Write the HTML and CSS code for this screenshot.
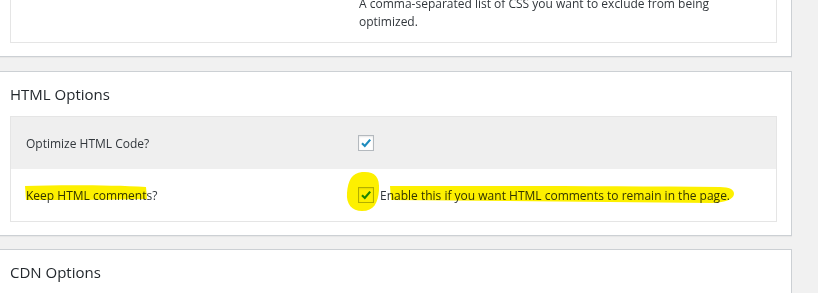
FILE: index.html
```html
<!DOCTYPE html>
<html lang="en">
    <head>
        <meta charset="UTF-8" />
        <title>Optimization Settings</title>
        <link rel="stylesheet" href="styles.css">
    </head>
    <body>
        <div class="page">
            <div class="postbox postbox-cut">
                <div class="form-table">
                    <div class="form-row">
                        <div class="row-label"></div>
                        <div class="row-field">
                            <p class="description">A comma-separated list of CSS you want to exclude from being optimized.</p>
                        </div>
                    </div>
                </div>
            </div>

            <div class="postbox postbox-html">
                <h2 class="postbox-title">HTML Options</h2>
                <div class="form-table">
                    <div class="form-row row-alt">
                        <div class="row-label">Optimize HTML Code?</div>
                        <div class="row-field">
                            <span class="checkbox checked">
                                <svg viewBox="0 0 16 16" width="16" height="16"><path d="M4 8.3 L6.8 11 L12.2 4.6" /></svg>
                            </span>
                        </div>
                    </div>
                    <div class="form-row">
                        <div class="row-label">Keep HTML comments?</div>
                        <div class="row-field">
                            <span class="checkbox checked">
                                <svg viewBox="0 0 16 16" width="16" height="16"><path d="M4 8.3 L6.8 11 L12.2 4.6" /></svg>
                            </span>
                            <span class="field-label">Enable this if you want HTML comments to remain in the page.</span>
                        </div>
                    </div>
                </div>
            </div>

            <div class="postbox">
                <h2 class="postbox-title">CDN Options</h2>
            </div>

            <!-- highlighter marks drawn over the screenshot -->
            <svg class="marker" viewBox="0 0 818 293" width="818" height="293">
                <path d="M25,186 C60,185 110,185 146,187 L147,199 C110,200 60,200 26,200 Z" />
                <path d="M362,172 C374,171 380,176 379,190 C378,203 374,211 362,211 C352,211 346,204 347,193 C348,180 352,173 362,172 Z" />
                <path d="M390,186 C500,186 620,186 720,187 Q734,187 734,194 Q733,202 712,203 C600,202 500,201 391,200 Z" />
            </svg>
        </div>
    </body>
</html>
```

FILE: styles.css
```css
:root {
    --page-bg: #f1f1f1;
    --box-border: #ccd0d4;
    --table-border: #e5e5e5;
    --alt-row: #efefef;
    --text-color: #32373c;
    --title-color: #23282d;
    --check-color: #1e8cbe;
    --marker-color: #fdf000;
}

body {
    margin: 0;
    background-color: var(--page-bg);
    font-family: 'Open Sans', 'Noto Sans', sans-serif;
    font-size: 12px;
    color: var(--text-color);
}

.page {
    position: relative;
    width: 792px;
    height: 293px;
    overflow: hidden;
}

.postbox {
    background-color: white;
    border: 1px solid var(--box-border);
    border-left: none;
    margin-bottom: 14px;
    box-shadow: 0 1px 1px rgba(0, 0, 0, 0.04);
}

.postbox-cut {
    border-top: none;
}

.postbox-html {
    margin-bottom: 13px;
}

.postbox-title {
    margin: 0;
    padding: 0 10px;
    height: 44px;
    line-height: 44px;
    font-size: 15px;
    font-weight: 400;
    color: var(--title-color);
}

.form-table {
    margin: 0 14px 13px 10px;
    border: 1px solid var(--table-border);
}

.postbox-cut .form-table {
    border-top: none;
}

.form-row {
    display: grid;
    grid-template-columns: 347px 1fr;
    align-items: center;
    height: 52px;
}

.row-alt {
    background-color: var(--alt-row);
}

.row-label {
    padding-left: 15px;
}

.row-field {
    display: flex;
    align-items: center;
    gap: 6px;
}

.postbox-cut .form-row {
    height: auto;
    align-items: start;
}

.description {
    margin: -5px 0 11px 1px;
    line-height: 18px;
    width: 365px;
}

.checkbox {
    width: 14px;
    height: 14px;
    border: 1px solid #b4b9be;
    background-color: white;
    box-shadow: inset 0 1px 2px rgba(0, 0, 0, 0.1);
    display: flex;
}

.checkbox svg {
    margin: -1px;
}

.checkbox path {
    fill: none;
    stroke: var(--check-color);
    stroke-width: 2.2;
}

.marker {
    position: absolute;
    top: 0;
    left: 0;
    pointer-events: none;
    mix-blend-mode: multiply;
}

.marker path {
    fill: var(--marker-color);
}
```
